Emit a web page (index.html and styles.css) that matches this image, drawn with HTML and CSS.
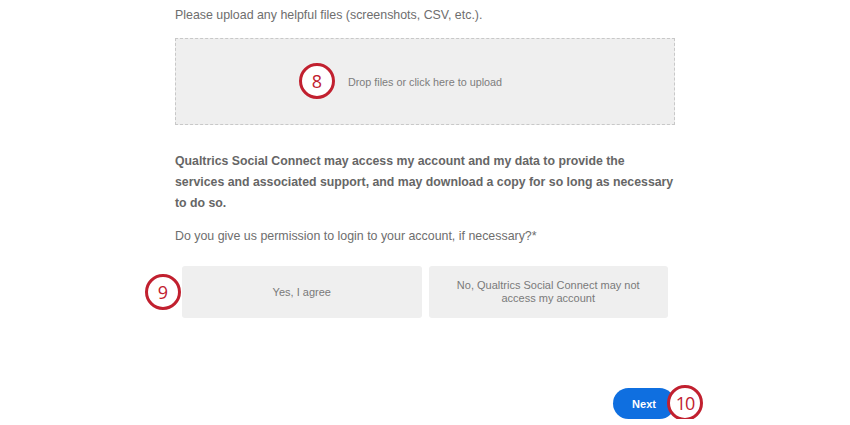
FILE: index.html
```html
<!DOCTYPE html>
<html lang="en">
<head>
  <meta charset="UTF-8">
  <title>Support Request</title>
  <link rel="stylesheet" href="styles.css">
</head>
<body>

<div class="survey">
  <p class="question">Please upload any helpful files (screenshots, CSV, etc.).</p>

  <div class="upload-box">
    <span class="step step-8">8</span>
    <span class="upload-text">Drop files or click here to upload</span>
  </div>

  <p class="consent">Qualtrics Social Connect may access my account and my data to provide the<br>services and associated support, and may download a copy for so long as necessary to do so.</p>

  <p class="question permission">Do you give us permission to login to your account, if necessary?*</p>

  <div class="choices">
    <span class="step step-9">9</span>
    <button class="choice">Yes, I agree</button>
    <button class="choice">No, Qualtrics Social Connect may not<br>access my account</button>
  </div>

  <div class="footer">
    <div class="next-wrap">
      <button class="next-btn">Next</button>
      <span class="step step-10">10</span>
    </div>
  </div>
</div>

</body>
</html>
```

FILE: styles.css
```css
body {
  margin: 0;
  background: #fff;
  font-family: 'Liberation Sans', Arial, Helvetica, sans-serif;
  color: #6e6e6e;
}

.survey {
  width: 500px;
  margin: 0 auto;
  padding-top: 5px;
}

.question {
  margin: 0;
  font-size: 12.4px;
  line-height: 20px;
}

.upload-box {
  position: relative;
  margin-top: 13px;
  height: 85px;
  border: 1px dashed #c8c8c8;
  background: #efefef;
  display: flex;
  justify-content: center;
  align-items: center;
}

.upload-text {
  font-size: 10.8px;
  color: #7d7d7d;
}

.consent {
  margin: 26px -6px 0 0;
  font-size: 12.3px;
  font-weight: bold;
  line-height: 21px;
  color: #666;
}

.permission {
  margin-top: 12px;
}

.choices {
  position: relative;
  width: 486px;
  margin: 20px auto 0;
  display: flex;
  gap: 7px;
}

.choice {
  flex: 1;
  height: 52px;
  border: none;
  border-radius: 3px;
  background: #efefef;
  font-family: inherit;
  font-size: 11px;
  line-height: 13px;
  color: #7a7a7a;
  text-align: center;
  cursor: pointer;
}

.footer {
  margin-top: 70px;
  display: flex;
  justify-content: flex-end;
}

.next-wrap {
  position: relative;
}

.next-btn {
  width: 62px;
  height: 31px;
  border: none;
  border-radius: 16px;
  background: #0f6fe0;
  color: #fff;
  font-family: inherit;
  font-size: 11px;
  font-weight: bold;
  cursor: pointer;
}

/* numbered callouts drawn over the form */
.step {
  position: absolute;
  box-sizing: border-box;
  width: 36px;
  height: 36px;
  border: 3px solid #c1202f;
  border-radius: 50%;
  background: #fff;
  color: #c1202f;
  font-family: 'Open Sans', sans-serif;
  font-size: 18px;
  line-height: 30px;
  text-align: center;
}

.step-8 {
  left: 123px;
  top: 24px;
}

.step-9 {
  left: -37px;
  top: 8px;
}

.step-10 {
  left: 54px;
  top: -3px;
  letter-spacing: -1px;
}
```
